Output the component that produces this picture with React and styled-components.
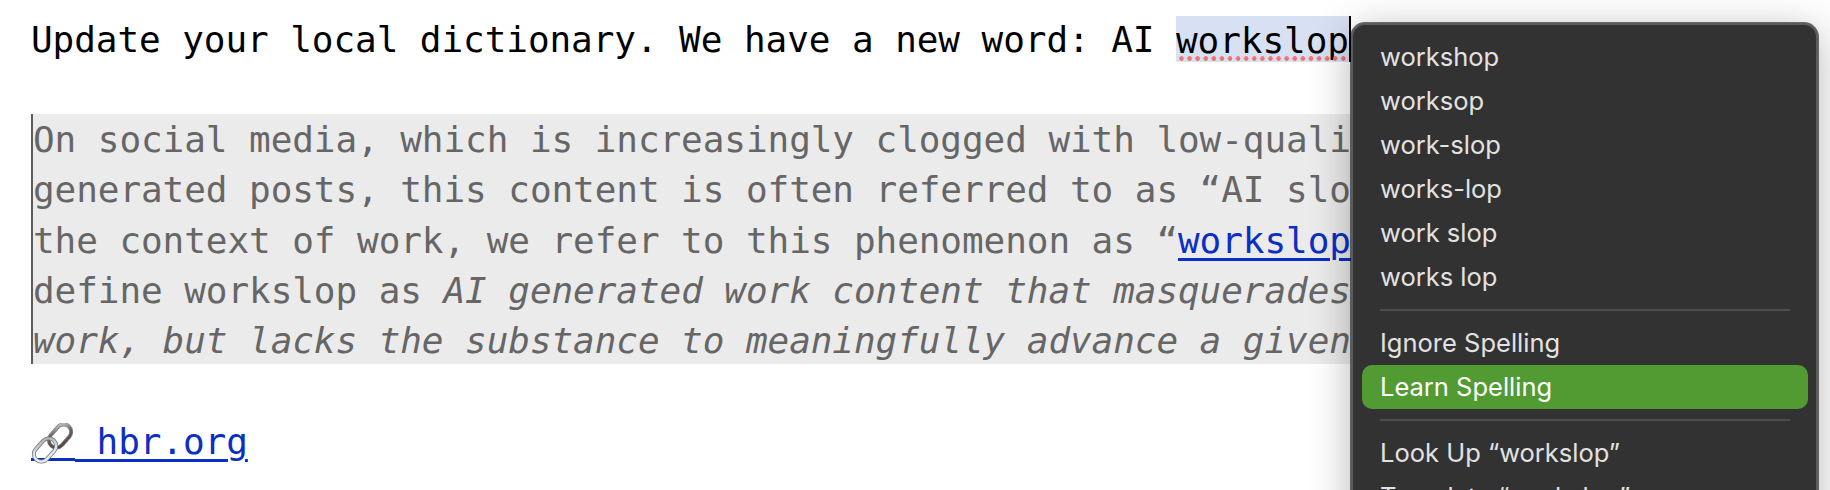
import React from "react";
import styled, { createGlobalStyle } from "styled-components";

const Global = createGlobalStyle`
  html, body {
    margin: 0;
    padding: 0;
    background: #fff;
  }
`;

const Page = styled.div`
  position: relative;
  width: 1830px;
  height: 490px;
  overflow: hidden;
  background: #fff;
  font-family: "DejaVu Sans Mono", "Liberation Mono", monospace;
  font-size: 36px;
  line-height: 50px;
  letter-spacing: -0.07px;
  color: #000;
  padding: 15px 0 0 31px;
  box-sizing: border-box;
`;

const Line = styled.div`
  white-space: pre;
`;

const Selected = styled.span`
  position: relative;
  display: inline-block;
  height: 46px;
  line-height: 50px;
  background: #d8e0f3;
  vertical-align: top;
  margin-top: 1px;
`;

const SpellDots = styled.span`
  position: absolute;
  left: 3px;
  right: 0;
  bottom: 1px;
  height: 5px;
  background: radial-gradient(circle at 2.5px 2.5px, #ee7470 2px, transparent 2.6px) 0 0 / 8.1px 5px repeat-x;
`;

const Caret = styled.span`
  position: absolute;
  top: 0;
  right: -2px;
  width: 2px;
  height: 46px;
  background: #000;
`;

const Quote = styled.blockquote`
  box-sizing: border-box;
  margin: 49px 0 0;
  padding-top: 1px;
  border-left: 2px solid #5c5c5c;
  background: #ebebeb;
  color: #666;
  width: 1760px;
  height: 250px;
  line-height: 50.25px;
`;

const Link = styled.a`
  color: #0b2ec4;
  text-decoration: underline;
  text-decoration-thickness: 3px;
  text-underline-offset: 5px;
`;

const LinkLine = styled(Line)`
  margin-top: 53px;
`;

const ChainIcon = styled.svg`
  width: 44px;
  height: 42px;
  vertical-align: -11px;
  background: linear-gradient(#0b2ec4, #0b2ec4) 0 35px / 100% 3px no-repeat;
`;

const Menu = styled.div`
  position: absolute;
  left: 1351px;
  top: 23px;
  width: 467px;
  height: 520px;
  box-sizing: border-box;
  padding: 10px 8px 0 9px;
  background: #323232;
  border: 2px solid #5c5c5c;
  border-radius: 14px;
  box-shadow: 0 0 0 1px rgba(0, 0, 0, 0.55), 0 8px 40px rgba(0, 0, 0, 0.3);
  font-family: Inter, "Noto Sans", sans-serif;
  font-size: 25.5px;
  line-height: 44px;
  letter-spacing: 0;
  color: #e2e2e2;
`;

const MenuItem = styled.div`
  height: 44px;
  padding-left: 18px;
  border-radius: 10px;
  white-space: nowrap;
  ${(p) => p.$active && "background: #529a32; color: #fff;"}
`;

const Separator = styled.div`
  height: 2px;
  margin: 10px 18px;
  background: #4d4d4d;
`;

const Chain = () => (
  <ChainIcon viewBox="0 0 44 42">
    <defs>
      <linearGradient id="top" x1="0" y1="1" x2="1" y2="0">
        <stop offset="0" stopColor="#4a4240" />
        <stop offset="0.6" stopColor="#6b615e" />
        <stop offset="1" stopColor="#c5d2e0" />
      </linearGradient>
      <linearGradient id="bottom" x1="0" y1="1" x2="1" y2="0">
        <stop offset="0" stopColor="#eef3f8" />
        <stop offset="0.55" stopColor="#d5e0ea" />
        <stop offset="1" stopColor="#a2a2a6" />
      </linearGradient>
    </defs>
    {/* back link, upper right */}
    <g transform="rotate(-48 29 13)">
      <rect x="16" y="5.5" width="26" height="15" rx="7.5" fill="none" stroke="#8d8684" strokeWidth="4" />
      <rect x="16" y="5.5" width="26" height="15" rx="7.5" fill="none" stroke="url(#top)" strokeWidth="2.6" />
    </g>
    {/* front link, lower left */}
    <g transform="rotate(-48 14 27)">
      <rect x="1" y="19.5" width="26" height="15" rx="7.5" fill="none" stroke="#77797c" strokeWidth="4" />
      <rect x="1" y="19.5" width="26" height="15" rx="7.5" fill="none" stroke="url(#bottom)" strokeWidth="2.4" />
    </g>
  </ChainIcon>
);

const App = () => (
  <Page>
    <Global />
    <Line>
      Update your local dictionary. We have a new word: AI{" "}
      <Selected>
        workslop
        <SpellDots />
        <Caret />
      </Selected>
    </Line>
    <Quote>
      <Line>On social media, which is increasingly clogged with low-quality AI-</Line>
      <Line>generated posts, this content is often referred to as “AI slop.” In</Line>
      <Line>
        the context of work, we refer to this phenomenon as “<Link href="#">workslop</Link>.” We
      </Line>
      <Line>
        define workslop as <em>AI generated work content that masquerades as good</em>
      </Line>
      <Line>
        <em>work, but lacks the substance to meaningfully advance a given task.</em>
      </Line>
    </Quote>
    <LinkLine>
      <Link href="#">
        <Chain /> hbr.org
      </Link>
    </LinkLine>
    <Menu>
      <MenuItem>workshop</MenuItem>
      <MenuItem>worksop</MenuItem>
      <MenuItem>work-slop</MenuItem>
      <MenuItem>works-lop</MenuItem>
      <MenuItem>work slop</MenuItem>
      <MenuItem>works lop</MenuItem>
      <Separator />
      <MenuItem>Ignore Spelling</MenuItem>
      <MenuItem $active>Learn Spelling</MenuItem>
      <Separator />
      <MenuItem>Look Up “workslop”</MenuItem>
      <MenuItem>Translate “workslop”</MenuItem>
    </Menu>
  </Page>
);

export default App;
